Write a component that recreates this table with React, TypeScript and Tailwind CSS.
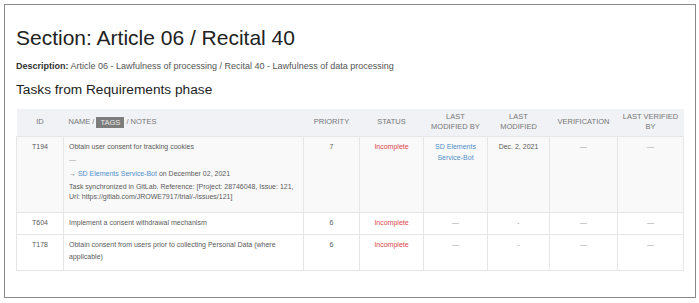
import React from "react";

const Dash = () => <span className="text-[#a0a0a0]">—</span>;

const base = "border border-[#e6e6e6] align-top pt-[4px] pb-[6px] px-[5px] text-[7px] leading-[11px]";
const td = base + " text-[#5a5a5a]";
const tdc = base + " text-[#5a5a5a] text-center";
const tdRed = base + " text-center text-[#e0474c]";
const tdBlue = base + " text-center text-[#4f8fcb]";
const tdGray = base + " text-center text-[#999]";

export default function App() {
  const th = "font-normal uppercase text-[7.5px] leading-[10px] text-[#777] align-middle text-center px-[3px]";
  const thL = "font-normal uppercase text-[7.5px] leading-[10px] text-[#777] align-middle text-left px-[5px]";
  return (
    <div className="w-[699px] h-[303px] bg-white p-[4px] font-['Liberation_Sans',Arial,sans-serif]">
      <div className="w-[692px] h-[294px] border border-[#8a8a8a] pl-[11px] pr-[11px] pt-[21px]">
        <h1 className="text-[21px] leading-[24px] text-[#222] font-normal">Section: Article 06 / Recital 40</h1>
        <p className="mt-[9.5px] text-[9px] leading-[12px] text-[#555]">
          <span className="font-bold text-[#333]">Description:</span> Article 06 - Lawfulness of processing / Recital 40 - Lawfulness of data processing
        </p>
        <h2 className="mt-[10.5px] text-[13.7px] leading-[16px] text-[#222] font-normal">Tasks from Requirements phase</h2>
        <table className="mt-[11px] w-[667px] table-fixed border-collapse">
          <colgroup>
            <col className="w-[47px]" />
            <col className="w-[240px]" />
            <col className="w-[56px]" />
            <col className="w-[64px]" />
            <col className="w-[64px]" />
            <col className="w-[62px]" />
            <col className="w-[68px]" />
            <col className="w-[66px]" />
          </colgroup>
          <thead>
            <tr className="h-[27px] bg-[#f0f2f6]">
              <th className={th}>ID</th>
              <th className={thL}>
                NAME /{" "}
                <span className="inline-block bg-[#7d7d7d] text-[#e8e8e8] px-[4px] leading-[11px] align-middle">TAGS</span>{" "}
                / NOTES
              </th>
              <th className={th}>Priority</th>
              <th className={th}>Status</th>
              <th className={th}>Last<br />modified by</th>
              <th className={th}>Last<br />modified</th>
              <th className={th}>Verification</th>
              <th className={th}>Last verified<br />by</th>
            </tr>
          </thead>
          <tbody>
            <tr className="bg-[#f9f9f9]">
              <td className={tdc}>T194</td>
              <td className={td}>
                <div>Obtain user consent for tracking cookies</div>
                <div className="mt-[3px] leading-[10px] text-[#a0a0a0]">—</div>
                <div className="mt-[4px] leading-[10px]">
                  → <span className="text-[#4f8fcb]">SD Elements Service-Bot</span> on December 02, 2021
                </div>
                <div className="mt-[3px] mb-[4px] leading-[10px]">
                  Task synchronized in GitLab. Reference: [Project: 28746048, Issue: 121, Url: https://gitlab.com/JROWE7917/trial/-/issues/121]
                </div>
              </td>
              <td className={tdc}>7</td>
              <td className={tdRed}>Incomplete</td>
              <td className={tdBlue}>SD Elements<br />Service-Bot</td>
              <td className={tdc}>Dec. 2, 2021</td>
              <td className={tdc}><Dash /></td>
              <td className={tdc}><Dash /></td>
            </tr>
            <tr className="bg-white">
              <td className={tdc}>T604</td>
              <td className={td}>Implement a consent withdrawal mechanism</td>
              <td className={tdc}>6</td>
              <td className={tdRed}>Incomplete</td>
              <td className={tdc}><Dash /></td>
              <td className={tdGray}>-</td>
              <td className={tdc}><Dash /></td>
              <td className={tdc}><Dash /></td>
            </tr>
            <tr className="bg-white">
              <td className={tdc}>T178</td>
              <td className={base + " text-[#5a5a5a] !leading-[12px] !pb-[7px]"}>Obtain consent from users prior to collecting Personal Data (where applicable)</td>
              <td className={tdc}>6</td>
              <td className={tdRed}>Incomplete</td>
              <td className={tdc}><Dash /></td>
              <td className={tdGray}>-</td>
              <td className={tdc}><Dash /></td>
              <td className={tdc}><Dash /></td>
            </tr>
          </tbody>
        </table>
      </div>
    </div>
  );
}
